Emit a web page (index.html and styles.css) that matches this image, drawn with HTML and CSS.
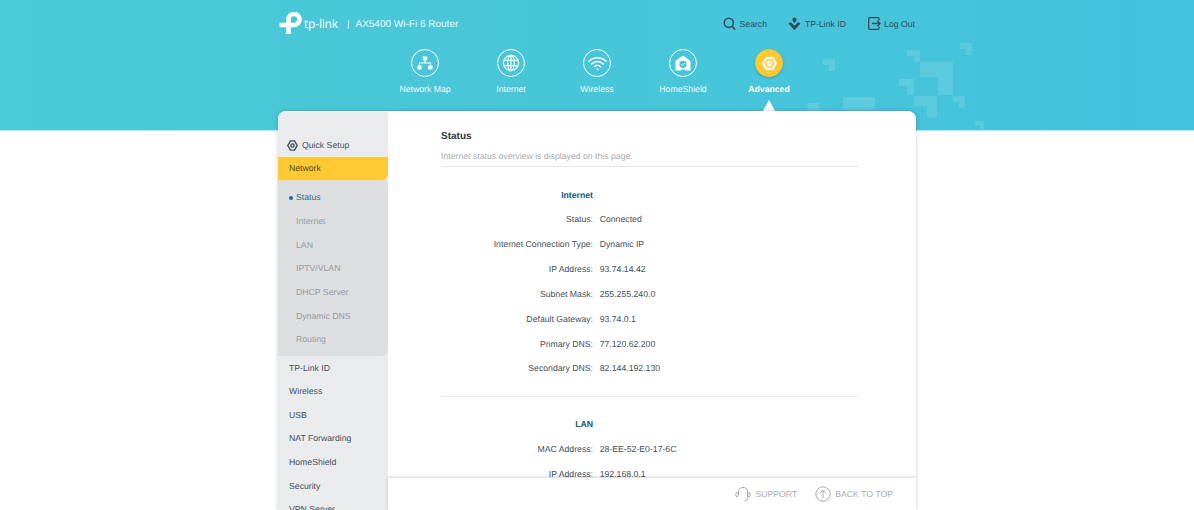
FILE: index.html
```html
<!DOCTYPE html>
<html lang="en">
<head>
<meta charset="utf-8">
<title>AX5400 Wi-Fi 6 Router</title>
<link rel="stylesheet" href="styles.css">
</head>
<body>
<header class="header">
  <svg class="pattern" width="1194" height="130" viewBox="0 0 1194 130" aria-hidden="true">
    <path d="M920 62h33v33h-15v-18h-18z"/>
    <path d="M907 50h13v12h-6v-6h-7z"/>
    <path d="M960 43h12v12h-6v-6h-6z"/>
    <path d="M823 59h12v12h-6v-6h-6z"/>
    <path d="M899 79h15v16h-7v-9h-8z"/>
    <path d="M914 96h23v22h-10v-12h-13z"/>
    <path d="M953 96h12v12h-6v-6h-6z"/>
    <path d="M975 121h9v9h-4v-5h-5z"/>
    <path d="M843 97h32v13h-32z"/>
    <path d="M807 103h12v7h-12z"/>
  </svg>
  <div class="topbar">
    <div class="brand">
      <svg class="logo" width="24" height="22" viewBox="0 0 24 22"><path d="M10.5 22V7.5A5.5 5.5 0 1 1 16 13H1.5" fill="none" stroke="#fff" stroke-width="4.6" stroke-linejoin="round"/><circle cx="1.6" cy="13" r="1.6" fill="#fff" opacity="0"/></svg>
      <span class="logo-text">tp-link</span>
      <span class="brand-sep">|</span>
      <span class="model">AX5400 Wi-Fi 6 Router</span>
    </div>
    <div class="tools">
      <a class="tool tool-search">
        <svg width="13" height="14" viewBox="0 0 13 14"><circle cx="5.8" cy="5.8" r="4.6" fill="none" stroke="#34495a" stroke-width="1.5"/><path d="M9.2 9.4l3 3.4" stroke="#34495a" stroke-width="1.6" fill="none"/></svg>
        <span>Search</span>
      </a>
      <a class="tool tool-id">
        <svg width="13" height="14" viewBox="0 0 13 14"><path d="M6.5 0.5a2 2 0 0 1 2 2c0 1.3-1.2 2.6-2 3.4-.8-.8-2-2.1-2-3.4a2 2 0 0 1 2-2z" fill="#34495a"/><path d="M0.5 6.5l2.4-1.2 3.6 3.4 3.6-3.4 2.4 1.2-6 6.8z" fill="#34495a"/></svg>
        <span>TP-Link ID</span>
      </a>
      <a class="tool tool-logout">
        <svg width="13" height="13" viewBox="0 0 13 13"><path d="M11 3.5V1.7a1 1 0 0 0-1-1H1.7a1 1 0 0 0-1 1v9.6a1 1 0 0 0 1 1H10a1 1 0 0 0 1-1V9.5" fill="none" stroke="#34495a" stroke-width="1.3"/><path d="M4 6.5h8M9.3 3.8l2.8 2.7-2.8 2.7" fill="none" stroke="#34495a" stroke-width="1.3"/></svg>
        <span>Log Out</span>
      </a>
    </div>
  </div>
  <nav class="nav">
    <a class="nav-item">
      <span class="nav-icon"><svg width="16" height="14" viewBox="0 0 16 14"><path d="M5.8 0.5h4.4v4H8.6v1.9h5.4v3h1.5v4h-4.4v-4H13V7.4H3v2H4.5v4H0.5v-4H2v-3h5.4V4.5H5.8z" fill="#fff"/></svg></span>
      <span class="nav-label">Network Map</span>
    </a>
    <a class="nav-item">
      <span class="nav-icon"><svg width="18" height="18" viewBox="0 0 18 18" fill="none" stroke="#fff" stroke-width="1.2"><circle cx="9" cy="9" r="7.6"/><ellipse cx="9" cy="9" rx="3.4" ry="7.6"/><path d="M9 1.4v15.2M1.9 6.3h14.2M1.9 11.7h14.2"/></svg></span>
      <span class="nav-label">Internet</span>
    </a>
    <a class="nav-item">
      <span class="nav-icon"><svg width="19" height="15" viewBox="0 0 19 15" fill="none" stroke="#fff" stroke-width="1.5" stroke-linecap="round"><path d="M1 5.2a12 12 0 0 1 17 0M3.7 8a8.2 8.2 0 0 1 11.6 0M6.4 10.7a4.4 4.4 0 0 1 6.2 0"/><circle cx="9.5" cy="13.2" r="1" fill="#fff" stroke="none"/></svg></span>
      <span class="nav-label">Wireless</span>
    </a>
    <a class="nav-item">
      <span class="nav-icon"><svg width="16" height="16" viewBox="0 0 16 16"><path d="M8 0.5L15.5 6v9.5h-5.2L8 14l-2.3 1.5H0.5V6z" fill="#fff"/><path d="M4.5 6.8L8 5.6l3.5 1.2v3.4c0 1.4-1.6 2.4-3.5 3.2-1.9-.8-3.5-1.8-3.5-3.2z" fill="#46c4db"/><path d="M6.2 9.2l1.3 1.3 2.4-2.4" fill="none" stroke="#fff" stroke-width="1"/></svg></span>
      <span class="nav-label">HomeShield</span>
    </a>
    <a class="nav-item nav-active">
      <span class="nav-icon"><svg width="15" height="13" viewBox="0 0 16 14" fill="none" stroke="#fff" stroke-width="2.2"><path d="M4.7 1.2h6.6L14.8 7l-3.5 5.8H4.7L1.2 7z"/><circle cx="8" cy="7" r="2.1"/></svg></span>
      <span class="nav-label">Advanced</span>
      <span class="nav-caret"></span>
    </a>
  </nav>
</header>
<div class="card">
  <aside class="side">
    <a class="side-item side-quick">
      <svg width="11" height="11" viewBox="0 0 16 16" fill="none" stroke="#3c4a55" stroke-width="2"><path d="M5 1.2h6L14.8 8 11 14.8H5L1.2 8z"/><circle cx="8" cy="8" r="2.4"/></svg>
      <span>Quick Setup</span>
    </a>
    <a class="side-item side-current">Network</a>
    <div class="sub">
      <a class="sub-item sub-active">Status</a>
      <a class="sub-item">Internet</a>
      <a class="sub-item">LAN</a>
      <a class="sub-item">IPTV/VLAN</a>
      <a class="sub-item">DHCP Server</a>
      <a class="sub-item">Dynamic DNS</a>
      <a class="sub-item">Routing</a>
    </div>
    <a class="side-item">TP-Link ID</a>
    <a class="side-item">Wireless</a>
    <a class="side-item">USB</a>
    <a class="side-item">NAT Forwarding</a>
    <a class="side-item">HomeShield</a>
    <a class="side-item">Security</a>
    <a class="side-item">VPN Server</a>
  </aside>
  <main class="main">
    <div class="scroll">
      <h1 class="title">Status</h1>
      <p class="note">Internet status overview is displayed on this page.</p>
      <section class="block block-first">
        <h2 class="block-title">Internet</h2>
        <dl class="rows">
          <div class="row"><dt>Status:</dt><dd>Connected</dd></div>
          <div class="row"><dt>Internet Connection Type:</dt><dd>Dynamic IP</dd></div>
          <div class="row"><dt>IP Address:</dt><dd>93.74.14.42</dd></div>
          <div class="row"><dt>Subnet Mask:</dt><dd>255.255.240.0</dd></div>
          <div class="row"><dt>Default Gateway:</dt><dd>93.74.0.1</dd></div>
          <div class="row"><dt>Primary DNS:</dt><dd>77.120.62.200</dd></div>
          <div class="row"><dt>Secondary DNS:</dt><dd>82.144.192.130</dd></div>
        </dl>
      </section>
      <section class="block block-second">
        <h2 class="block-title">LAN</h2>
        <dl class="rows">
          <div class="row"><dt>MAC Address:</dt><dd>28-EE-52-E0-17-6C</dd></div>
          <div class="row"><dt>IP Address:</dt><dd>192.168.0.1</dd></div>
        </dl>
      </section>
    </div>
    <footer class="foot">
      <a class="foot-link foot-support">
        <svg width="16" height="16" viewBox="0 0 16 16" fill="none" stroke="#a9a9a9" stroke-width="1"><path d="M3.4 8V6a4.6 4.6 0 0 1 9.2 0v5.5a3.6 3.6 0 0 1-3.2 3.6"/><rect x="0.8" y="6.6" width="2.6" height="4" rx="1.3"/><rect x="12.6" y="6.6" width="2.6" height="4" rx="1.3"/></svg>
        <span>SUPPORT</span>
      </a>
      <a class="foot-link">
        <svg width="16" height="16" viewBox="0 0 16 16" fill="none" stroke="#a9a9a9" stroke-width="1"><circle cx="8" cy="8" r="7.2"/><path d="M8 12V4.4M5 7.2l3-3 3 3"/></svg>
        <span>BACK TO TOP</span>
      </a>
    </footer>
  </main>
</div>
</body>
</html>
```
FILE: styles.css
```css
* { box-sizing: border-box; }
html, body { margin: 0; height: 510px; overflow: hidden; background: #fff; }
body { font-family: "Liberation Sans", Arial, sans-serif; font-size: 8.7px; color: #44515b; text-rendering: geometricPrecision; }
a { color: inherit; text-decoration: none; }

.header {
  position: relative;
  height: 130px;
  background: linear-gradient(90deg, #4ac9d6 0%, #48c6d9 50%, #43c1dd 100%);
  box-shadow: 0 1px 0 rgba(74, 200, 214, .4);
}
.pattern { position: absolute; left: 0; top: 0; }
.pattern path { fill: rgba(255, 255, 255, .12); }

.topbar {
  position: relative;
  width: 638px;
  margin: 0 auto;
  padding: 12px 1px 0 0;
  display: flex;
  justify-content: space-between;
  align-items: flex-start;
}
.brand { display: flex; align-items: center; height: 22px; color: #fff; }
.logo { display: block; }
.logo-text { margin-left: 2px; font-size: 12px; font-family: "Open Sans", sans-serif; letter-spacing: -.2px; width: 43px; }
.brand-sep { font-size: 9.5px; margin-top: 2px; opacity: .85; }
.model { margin-left: 6px; margin-top: 2px; font-size: 10px; opacity: .9; }
.tools { display: flex; align-items: center; height: 23px; }
.tool { display: flex; align-items: center; gap: 4px; color: #34495a; }
.tool-search { margin-right: 21px; }
.tool-id { margin-right: 22px; }
.tool-logout { gap: 3px; }

.nav { position: relative; display: flex; justify-content: center; margin-top: 14px; }
.nav-item { position: relative; width: 86px; display: flex; flex-direction: column; align-items: center; color: #fff; height: 65px; }
.nav-icon {
  width: 28px; height: 28px;
  border: 1.5px solid #fff;
  border-radius: 50%;
  display: flex; align-items: center; justify-content: center;
}
.nav-label { margin-top: 7px; line-height: 10px; opacity: .92; }
.nav-active { font-weight: 700; }
.nav-active .nav-label { opacity: 1; }
.nav-active .nav-icon { background: #ffc933; border-color: #ffc933; box-shadow: 0 1px 3px rgba(0, 0, 0, .18); }
.nav-caret {
  position: absolute;
  left: 50%; top: 51px;
  margin-left: -6.5px;
  border-left: 6.5px solid transparent;
  border-right: 6.5px solid transparent;
  border-bottom: 11px solid #fff;
}

.card {
  position: relative;
  width: 638px;
  height: 399px;
  margin: -19px auto 0;
  display: flex;
  background: #fff;
  border-radius: 8px 8px 0 0;
  box-shadow: 0 0 4px rgba(0, 0, 0, .2);
  overflow: hidden;
}
.side { width: 110px; flex: none; background: #e9ebed; padding-top: 22px; }
.side-item { display: flex; align-items: center; height: 23.6px; padding-left: 11px; color: #44515b; }
.side-quick { gap: 4px; padding-left: 9px; height: 24px; }
.side-current { background: #ffc933; color: #4d4a30; height: 23px; padding-bottom: 1px; border-radius: 0 0 6px 0; }
.sub { background: #dcdee0; border-radius: 0 0 6px 0; padding: 5.5px 0 4.5px; }
.sub-item { display: flex; align-items: center; height: 23.7px; padding-left: 18px; color: #979ca1; position: relative; }
.sub-active { color: #2f6d85; }
.sub-active::before {
  content: "";
  position: absolute; left: 10.5px; top: 10px;
  width: 4px; height: 4px; border-radius: 50%;
  background: #1f6c86;
}

.main { flex: 1; display: flex; flex-direction: column; min-width: 0; }
.scroll { flex: 1; overflow: hidden; padding: 19px 58px 0 53px; }
.title { margin: 0; font-size: 10px; line-height: 13px; font-weight: 700; color: #2f3a45; }
.note { margin: 7px 0 0; padding-bottom: 3px; line-height: 13px; color: #a9acb0; border-bottom: 1px solid #e6e7e8; }
.block-first { margin-top: 22px; padding-bottom: 15.5px; border-bottom: 1px solid #e6e7e8; }
.block-second { margin-top: 21px; }
.block-title { margin: 0; width: 152px; text-align: right; font-size: 8.7px; line-height: 13px; font-weight: 700; color: #0f5a78; }
.rows { margin: 5px 0 0; }
.row { display: flex; height: 24.85px; align-items: center; }
.row dt { width: 152px; text-align: right; }
.row dd { margin: 0 0 0 6.7px; }

.foot {
  height: 32px;
  flex: none;
  display: flex;
  justify-content: flex-end;
  align-items: center;
  gap: 18px;
  padding-right: 23px;
  background: #fff;
  box-shadow: 0 -1px 3px rgba(0, 0, 0, .18);
  position: relative;
  color: #aaabac;
}
.foot-link { display: flex; align-items: center; gap: 4px; }
```
